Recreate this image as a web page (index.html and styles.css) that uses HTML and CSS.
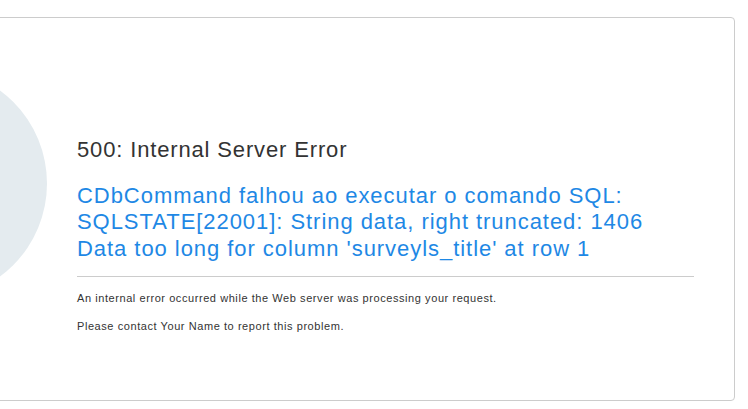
FILE: index.html
```html
<!DOCTYPE html>
<html lang="en">
<head>
<meta charset="utf-8">
<title>500: Internal Server Error</title>
<link rel="stylesheet" href="styles.css">
</head>
<body>
<div class="page">
  <div class="card">
    <div class="circle"></div>
    <div class="content">
      <h1 class="title">500: Internal Server Error</h1>
      <h2 class="message">CDbCommand falhou ao executar o comando SQL:<br>SQLSTATE[22001]: String data, right truncated: 1406<br>Data too long for column 'surveyls_title' at row 1</h2>
      <hr class="rule">
      <p class="note">An internal error occurred while the Web server was processing your request.</p>
      <p class="note">Please contact Your Name to report this problem.</p>
    </div>
  </div>
</div>
</body>
</html>
```

FILE: styles.css
```css
html, body {
  margin: 0;
  padding: 0;
  background: #ffffff;
  overflow: hidden;
}

.page {
  padding-top: 17px;
  width: 748px;
  height: 409px;
  box-sizing: border-box;
}

.card {
  display: flex;
  align-items: flex-start;
  margin-left: -10px;
  margin-right: 13px;
  height: 384px;
  box-sizing: border-box;
  border: 1px solid #cccccc;
  border-radius: 4px;
  background: #ffffff;
  overflow: hidden;
  padding-top: 50px;
}

.circle {
  flex-shrink: 0;
  width: 231px;
  height: 231px;
  border-radius: 50%;
  background: #e4ebef;
  margin-left: -175px;
}

.content {
  margin-left: 30px;
  margin-top: 69px;
  width: 617px;
  font-family: "Liberation Sans", Arial, sans-serif;
}

.title {
  margin: 0;
  font-size: 22px;
  line-height: 26px;
  font-weight: normal;
  letter-spacing: 0.85px;
  color: #333333;
}

.message {
  margin: 20px 0 0 0;
  font-size: 22px;
  line-height: 26.3px;
  font-weight: normal;
  letter-spacing: 0.95px;
  color: #1e88e5;
}

.rule {
  margin: 14px 0 0 0;
  border: 0;
  border-top: 1px solid #cccccc;
  height: 0;
}

.note {
  margin: 14px 0 0 0;
  font-size: 11px;
  line-height: 14px;
  letter-spacing: 0.57px;
  color: #333333;
}
```
